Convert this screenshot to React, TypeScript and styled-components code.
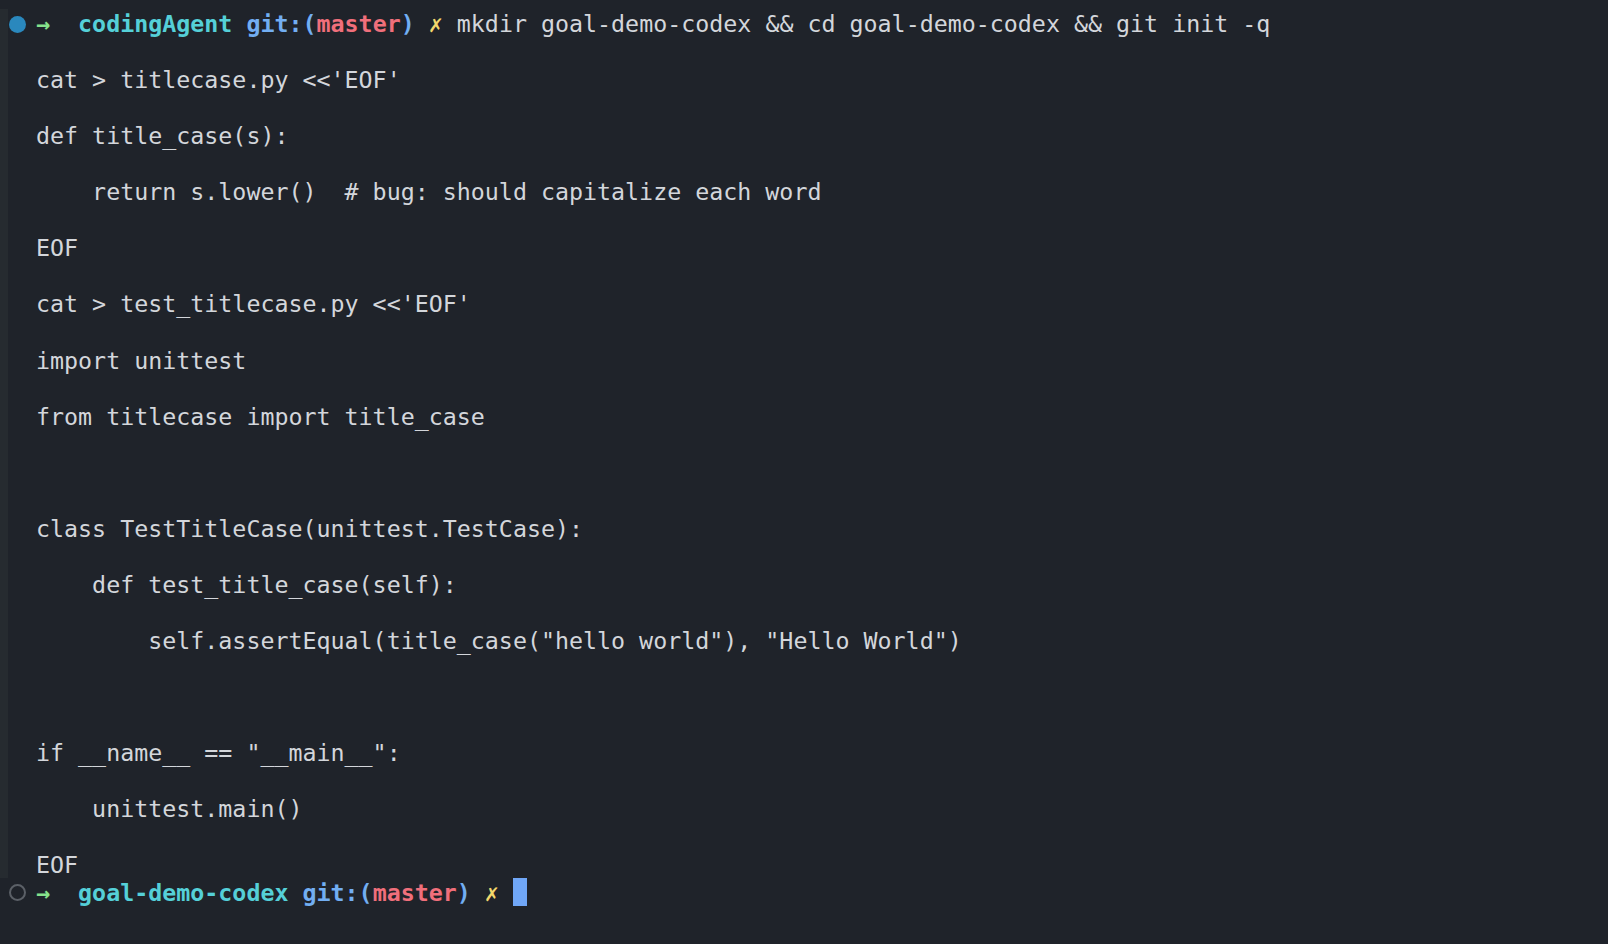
import React from "react";
import styled, { createGlobalStyle } from "styled-components";

const Global = createGlobalStyle`
  html, body { margin: 0; padding: 0; background: #1f232a; }
  body { width: 1608px; height: 944px; overflow: hidden; }
`;

const Terminal = styled.div`
  box-sizing: border-box;
  width: 1608px;
  height: 944px;
  background: #1f232a;
  padding-top: 9px;
  font-family: "DejaVu Sans Mono", "Liberation Mono", monospace;
  font-size: 23.3px;
  color: #d3d6db;
`;

const Block = styled.div`
  border-left: 8px solid #262b30;
  display: flex;
  flex-direction: column;
`;

const Free = styled.div`
  padding-left: 8px;
  display: flex;
  flex-direction: column;
`;

const Row = styled.div`
  display: flex;
  align-items: center;
  height: 28.05px;
`;

const Gutter = styled.div`
  width: 28px;
  flex: none;
  display: flex;
  align-items: center;
  padding-left: 1px;
  box-sizing: border-box;
`;

const Mark = styled.span<{ $active?: boolean }>`
  box-sizing: border-box;
  flex: none;
  width: 17px;
  height: 17px;
  border-radius: 50%;
  background: ${(p) => (p.$active ? "#2a88bd" : "transparent")};
  border: ${(p) => (p.$active ? "none" : "2.5px solid #5b6067")};
  margin-top: ${(p) => (p.$active ? 2 : 1)}px;
`;

const Line = styled.div`
  white-space: pre;
  line-height: 28.05px;
  padding-top: 2px;
  display: flex;
  align-items: center;
`;

const Seg = styled.span<{ $c: string; $bold?: boolean }>`
  color: ${(p) => p.$c};
  font-weight: ${(p) => (p.$bold ? 700 : 400)};
`;

const Glyph = styled.span<{ $c: string }>`
  display: inline-block;
  width: 1ch;
  text-align: center;
  color: ${(p) => p.$c};
  font-weight: 700;
  font-family: "DejaVu Sans Mono", "DejaVu Sans", monospace;
`;

const Cursor = styled.span`
  display: inline-block;
  width: 1ch;
  height: 28px;
  background: #70a7f7;
  margin-top: -2px;
`;

const C = {
  green: "#86e28c",
  cyan: "#55d0d8",
  blue: "#72aef2",
  red: "#f06f7b",
  yellow: "#f3d86c",
};

const Prompt: React.FC<{ dir: string; children?: React.ReactNode }> = ({ dir, children }) => (
  <>
    <Glyph $c={C.green}>→</Glyph>
    <span>{"  "}</span>
    <Seg $c={C.cyan} $bold>{dir}</Seg>
    <span> </span>
    <Seg $c={C.blue} $bold>git:(</Seg>
    <Seg $c={C.red} $bold>master</Seg>
    <Seg $c={C.blue} $bold>)</Seg>
    <span> </span>
    <Glyph $c={C.yellow}>✗</Glyph>
    <span> </span>
    {children}
  </>
);

const body: string[] = [
  "",
  "cat > titlecase.py <<'EOF'",
  "",
  "def title_case(s):",
  "",
  "    return s.lower()  # bug: should capitalize each word",
  "",
  "EOF",
  "",
  "cat > test_titlecase.py <<'EOF'",
  "",
  "import unittest",
  "",
  "from titlecase import title_case",
  "",
  "",
  "",
  "class TestTitleCase(unittest.TestCase):",
  "",
  "    def test_title_case(self):",
  "",
  '        self.assertEqual(title_case("hello world"), "Hello World")',
  "",
  "",
  "",
  'if __name__ == "__main__":',
  "",
  "    unittest.main()",
  "",
  "EOF",
];

export default function App() {
  return (
    <Terminal>
      <Global />
      <Block>
        <Row>
          <Gutter>
            <Mark $active />
          </Gutter>
          <Line>
            <Prompt dir="codingAgent">
              <span>mkdir goal-demo-codex &amp;&amp; cd goal-demo-codex &amp;&amp; git init -q</span>
            </Prompt>
          </Line>
        </Row>
        {body.map((t, i) => (
          <Row key={i}>
            <Gutter />
            <Line>{t}</Line>
          </Row>
        ))}
      </Block>
      <Free>
        <Row>
          <Gutter>
            <Mark />
          </Gutter>
          <Line>
            <Prompt dir="goal-demo-codex">
              <Cursor />
            </Prompt>
          </Line>
        </Row>
      </Free>
    </Terminal>
  );
}
